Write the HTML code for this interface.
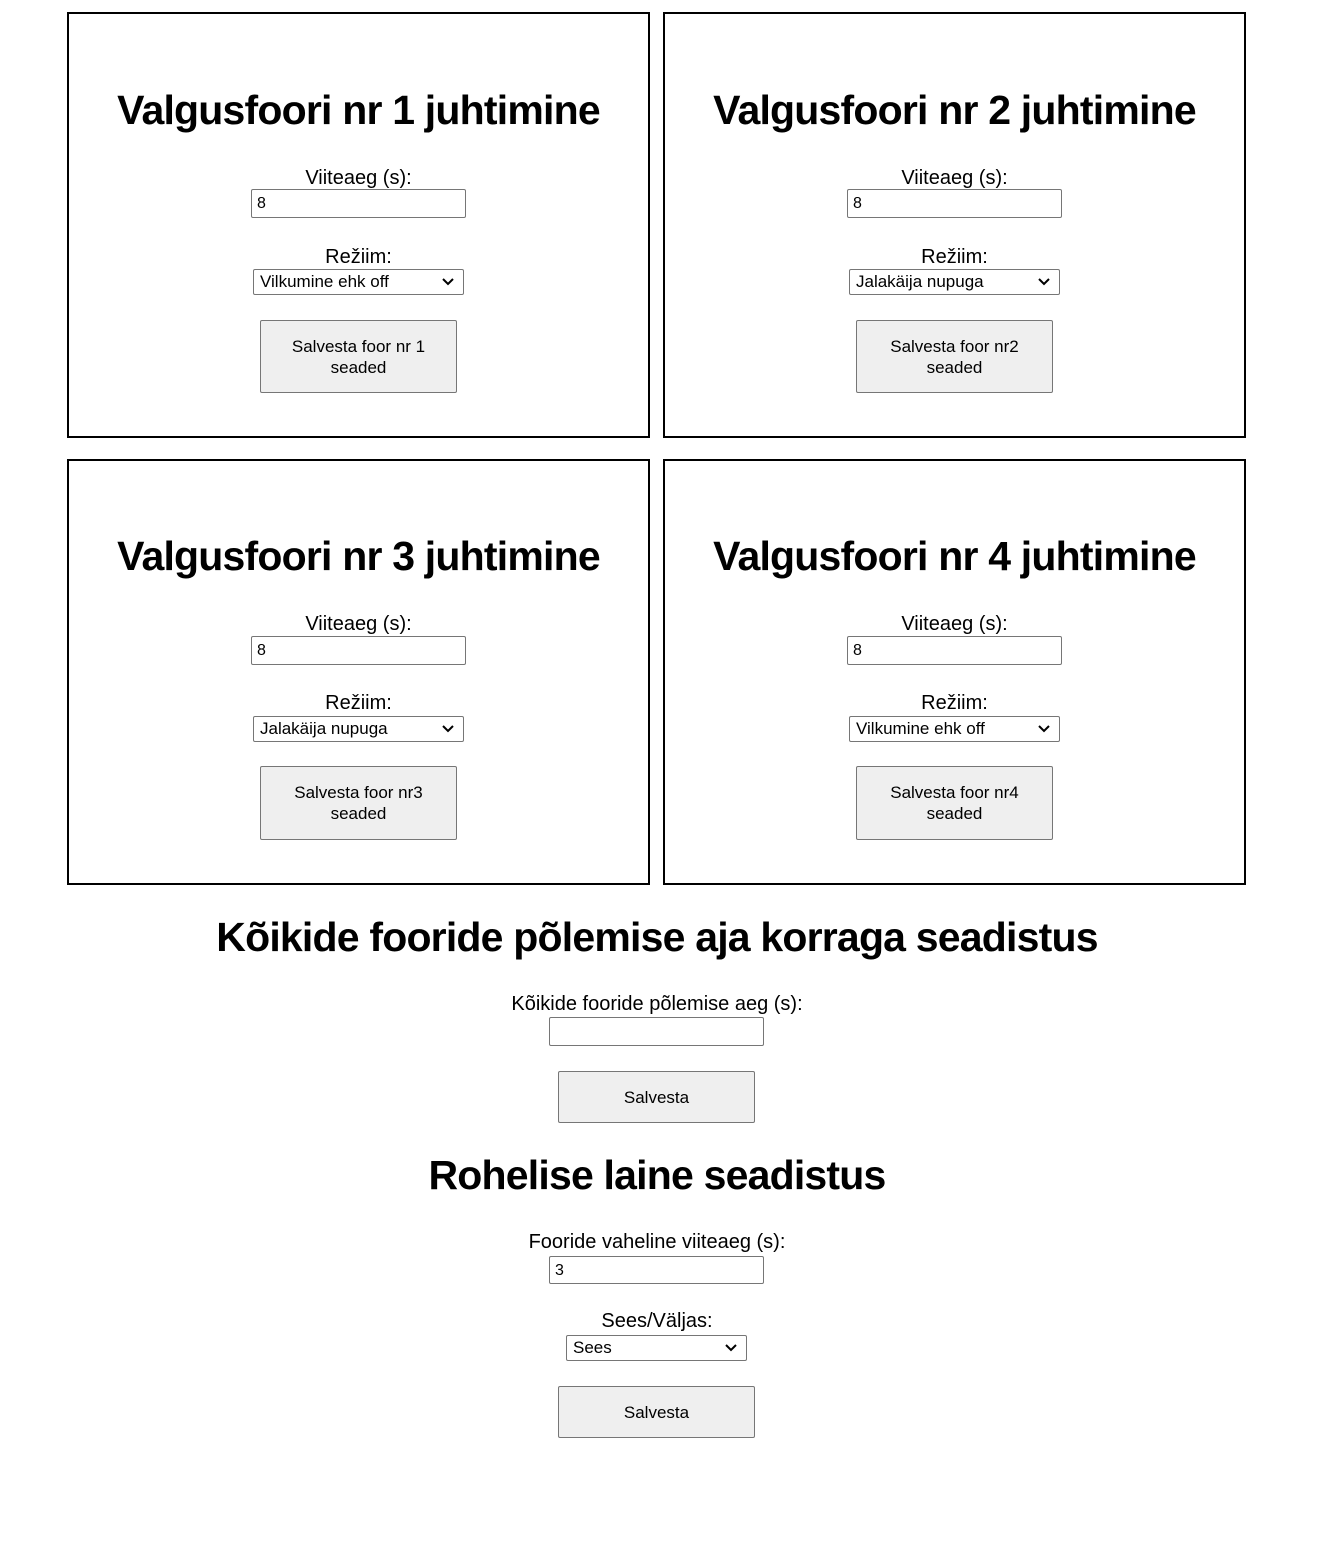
<!DOCTYPE html>
<html><head><meta charset="utf-8"><style>
body{margin:0;width:1320px;height:1568px;background:#fff;font-family:"Liberation Sans",sans-serif;color:#000;position:relative;overflow:hidden}
.box{position:absolute;width:579px;height:422px;border:2px solid #000}
.a{position:absolute}
.t{left:0;right:0;text-align:center;font-weight:bold;font-size:41px;line-height:48px;letter-spacing:-0.8px}
.l{left:0;right:0;text-align:center;font-size:20px;line-height:24px}
.in{box-sizing:border-box;border:1px solid #767676;border-radius:2px;font-size:16px;padding:3px 5px;line-height:22px;background:#fff}
.sel{box-sizing:border-box;border:1px solid #767676;border-radius:2px;font-size:17px;padding:0 6px;line-height:24px;background:#fff}
.sel svg{position:absolute;right:8px;top:7px}
.btn{box-sizing:border-box;border:1px solid #767676;border-radius:2px;background:#efefef;font-size:17px;line-height:21px;display:flex;align-items:center;justify-content:center;text-align:center}
</style></head><body>

<div class="box" style="left:67px;top:12px">
<div class="a t" style="top:72px">Valgusfoori nr 1 juhtimine</div>
<div class="a l" style="top:152px">Viiteaeg (s):</div>
<div class="a in" style="left:182px;top:175px;width:215px;height:29px">8</div>
<div class="a l" style="top:231px">Režiim:</div>
<div class="a sel" style="left:184px;top:255px;width:211px;height:26px">Vilkumine ehk off<svg width="14" height="10" viewBox="0 0 14 10"><path d="M2 2l5 5 5-5" stroke="#000" stroke-width="2" fill="none"/></svg></div>
<div class="a btn" style="left:191px;top:306px;width:197px;height:73px">Salvesta foor nr 1<br>seaded</div>
</div>

<div class="box" style="left:663px;top:12px">
<div class="a t" style="top:72px">Valgusfoori nr 2 juhtimine</div>
<div class="a l" style="top:152px">Viiteaeg (s):</div>
<div class="a in" style="left:182px;top:175px;width:215px;height:29px">8</div>
<div class="a l" style="top:231px">Režiim:</div>
<div class="a sel" style="left:184px;top:255px;width:211px;height:26px">Jalakäija nupuga<svg width="14" height="10" viewBox="0 0 14 10"><path d="M2 2l5 5 5-5" stroke="#000" stroke-width="2" fill="none"/></svg></div>
<div class="a btn" style="left:191px;top:306px;width:197px;height:73px">Salvesta foor nr2<br>seaded</div>
</div>

<div class="box" style="left:67px;top:459px">
<div class="a t" style="top:71px">Valgusfoori nr 3 juhtimine</div>
<div class="a l" style="top:151px">Viiteaeg (s):</div>
<div class="a in" style="left:182px;top:175px;width:215px;height:29px">8</div>
<div class="a l" style="top:230px">Režiim:</div>
<div class="a sel" style="left:184px;top:255px;width:211px;height:26px">Jalakäija nupuga<svg width="14" height="10" viewBox="0 0 14 10"><path d="M2 2l5 5 5-5" stroke="#000" stroke-width="2" fill="none"/></svg></div>
<div class="a btn" style="left:191px;top:305px;width:197px;height:74px">Salvesta foor nr3<br>seaded</div>
</div>

<div class="box" style="left:663px;top:459px">
<div class="a t" style="top:71px">Valgusfoori nr 4 juhtimine</div>
<div class="a l" style="top:151px">Viiteaeg (s):</div>
<div class="a in" style="left:182px;top:175px;width:215px;height:29px">8</div>
<div class="a l" style="top:230px">Režiim:</div>
<div class="a sel" style="left:184px;top:255px;width:211px;height:26px">Vilkumine ehk off<svg width="14" height="10" viewBox="0 0 14 10"><path d="M2 2l5 5 5-5" stroke="#000" stroke-width="2" fill="none"/></svg></div>
<div class="a btn" style="left:191px;top:305px;width:197px;height:74px">Salvesta foor nr4<br>seaded</div>
</div>

<div class="a t" style="top:913px;left:-6px">Kõikide fooride põlemise aja korraga seadistus</div>
<div class="a l" style="top:992px;left:-6px">Kõikide fooride põlemise aeg (s):</div>
<div class="a in" style="left:549px;top:1017px;width:215px;height:29px"></div>
<div class="a btn" style="left:558px;top:1071px;width:197px;height:52px">Salvesta</div>

<div class="a t" style="top:1151px;left:-6px">Rohelise laine seadistus</div>
<div class="a l" style="top:1230px;left:-6px">Fooride vaheline viiteaeg (s):</div>
<div class="a in" style="left:549px;top:1256px;width:215px;height:28px">3</div>
<div class="a l" style="top:1309px;left:-6px">Sees/Väljas:</div>
<div class="a sel" style="left:566px;top:1335px;width:181px;height:26px">Sees<svg width="14" height="10" viewBox="0 0 14 10"><path d="M2 2l5 5 5-5" stroke="#000" stroke-width="2" fill="none"/></svg></div>
<div class="a btn" style="left:558px;top:1386px;width:197px;height:52px">Salvesta</div>

</body></html>
